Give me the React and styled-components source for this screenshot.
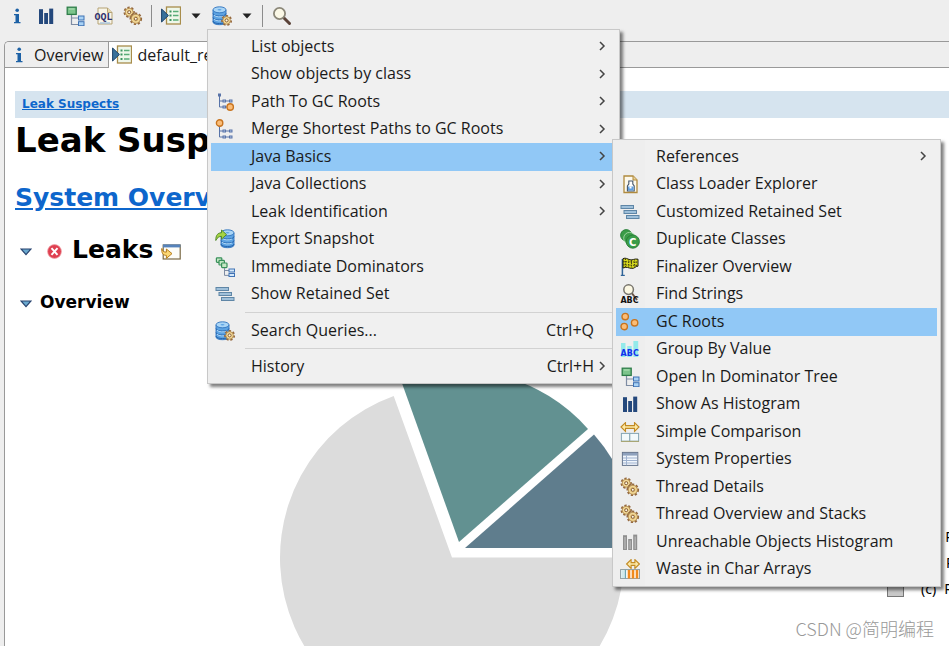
import React from 'react';
import styled, { createGlobalStyle } from 'styled-components';

const GlobalStyle = createGlobalStyle`
  * {
    box-sizing: border-box;
  }

  body {
    margin: 0;
    background: #eeeeee;
    font-family: 'Open Sans', 'Noto Sans CJK SC', sans-serif;
    font-size: 16px;
    color: #1a1a1a;
  }

  button {
    font: inherit;
    color: inherit;
    background: none;
    border: 0;
    padding: 0;
  }
`;

const Window = styled.div`
  position: relative;
  display: flex;
  flex-direction: column;
  height: 100vh;
  overflow: hidden;
`;

const Toolbar = styled.div`
  display: flex;
  align-items: center;
  gap: 8px;
  height: 32px;
  padding-left: 6px;
  margin-bottom: 9px;
`;

const ToolButton = styled.button`
  display: flex;
  align-items: center;
  justify-content: center;
  width: ${props => (props.$narrow ? 14 : 21)}px;
  height: 24px;
`;

const ToolSeparator = styled.div`
  width: 1px;
  height: 22px;
  background: #8c8c8c;
`;

const Editor = styled.div`
  flex: 1;
  min-height: 0;
  display: flex;
  flex-direction: column;
  margin-left: 4px;
  border: 1px solid #999999;
  border-width: 1px 0 0 1px;
  border-top-left-radius: 5px;
  overflow: hidden;
`;

const TabBar = styled.div`
  display: flex;
  height: 26px;
  flex-shrink: 0;
`;

const Tab = styled.button`
  display: flex;
  align-items: center;
  gap: 5px;
  padding: 0 5px 0 ${props => (props.$active ? 3 : 4)}px;
  border-right: 1px solid #999999;
  border-bottom: 1px solid ${props => (props.$active ? '#ffffff' : '#999999')};
  background: ${props => (props.$active ? '#ffffff' : '#eeeeee')};
  white-space: nowrap;
`;

const TabFill = styled.div`
  flex: 1;
  border-bottom: 1px solid #999999;
`;

const Report = styled.main`
  flex: 1;
  min-height: 0;
  padding: 23px 0 0 10px;
  background: #ffffff;
  color: #000000;
  font-family: 'DejaVu Sans', Verdana, sans-serif;
  overflow: hidden;
`;

const Breadcrumb = styled.nav`
  padding-left: 7px;
  background: #d6e4ef;
  font-size: 12px;
  font-weight: 700;
  line-height: 27px;
`;

const Link = styled.a`
  color: #0d66cc;
  text-decoration: underline;
`;

const Title = styled.h1`
  margin: 0;
  font-size: 34px;
  line-height: 44px;
  white-space: nowrap;
`;

const Heading = styled.h2`
  display: flex;
  align-items: center;
  margin: 19px 0 0;
  font-size: 25px;
  line-height: 33px;
  white-space: nowrap;
`;

const SubHeading = styled.h3`
  display: flex;
  align-items: center;
  margin: 26px 0 0;
  font-size: 17px;
  line-height: 20px;
`;

const Twistie = styled.button`
  display: flex;
  width: 12px;
  margin: 4px 0 0 5px;
`;

const HeadingIcon = styled.span`
  display: flex;
  margin: 4px 10px 0 ${props => (props.$wide ? 15 : 8)}px;
`;

const SubHeadingText = styled.span`
  margin-left: 8px;
`;

const ChartRow = styled.div`
  display: flex;
  align-items: center;
  gap: 255px;
  padding-left: 265px;
  margin-top: 58px;
`;

const PieSvg = styled.svg`
  flex-shrink: 0;
`;

const Legend = styled.ul`
  list-style: none;
  margin: 0;
  padding: 0;
  font-family: 'Noto Sans', sans-serif;
  font-size: 14px;
`;

const LegendItem = styled.li`
  display: flex;
  align-items: center;
  gap: 8px;
  height: 26px;
  white-space: nowrap;
`;

const Swatch = styled.span`
  width: 17px;
  height: 17px;
  margin-right: 9px;
  border: 1px solid #777777;
  background: ${props => props.$color};
`;

const MenuBox = styled.div`
  position: absolute;
  z-index: 2;
  padding: 3px;
  border: 1px solid #c8c8c8;
  background: linear-gradient(90deg, #eeeeee 32px, #f0f0f0 32px);
  box-shadow: 3px 3px 3px rgba(0, 0, 0, 0.5);
`;

const ContextMenu = styled(MenuBox)`
  top: 29px;
  left: 207px;
  width: 413px;
`;

const SubMenu = styled(MenuBox)`
  top: -4px;
  left: calc(100% - 4px);
  width: 329px;
`;

/* rows share the height of their group evenly */
const MenuGroup = styled.ul`
  display: grid;
  grid-auto-rows: 1fr;
  height: ${props => props.$height}px;
  margin: 0;
  padding: 0;
  list-style: none;
`;

const MenuDivider = styled.hr`
  height: 1px;
  margin: 4px 0 4px 34px;
  border: 0;
  background: #d2d2d2;
`;

const MenuRow = styled.li`
  position: relative;
  display: flex;
`;

const MenuButton = styled.button`
  display: flex;
  align-items: center;
  flex: 1;
  min-width: 0;
  padding: 0 8px 0 4px;
  background: ${props => (props.$active ? '#91c8f6' : 'transparent')};
  text-align: left;
  line-height: 20px;
  white-space: nowrap;
`;

const MenuIcon = styled.span`
  display: flex;
  width: 20px;
  height: 20px;
  margin-right: 16px;
`;

const MenuLabel = styled.span`
  flex: 1;
  padding-bottom: 2px;
`;

const Shortcut = styled.span`
  padding-bottom: 2px;
  margin-right: 4px;
`;

const Arrow = styled.span`
  display: flex;
  width: 10px;
  padding-bottom: 1px;
`;

const Watermark = styled.div`
  position: absolute;
  right: 15px;
  bottom: 5px;
  color: #999999;
  font-family: 'Noto Sans CJK SC', sans-serif;
  font-size: 18px;
  font-weight: 300;
  line-height: 26px;
`;

const Svg = ({ size = 20, children }) => (
  <svg width={size} height={size} viewBox="0 0 20 20" aria-hidden="true">
    {children}
  </svg>
);

const InfoIcon = () => (
  <Svg>
    <circle cx="10.2" cy="4.2" r="1.8" fill="#1d61a5" />
    <path d="M7 8h5v8h1.5v1.2H7V16h1.5V9.2H7z" fill="#1d61a5" />
  </Svg>
);

const HistogramIcon = ({ gray }) => (
  <Svg>
    <g fill={gray ? '#8f8f8f' : '#24487c'}>
      <rect x="3" y="3.2" width="4" height="14.8" />
      <rect x="8.2" y="7" width="3.8" height="11" />
      <rect x="13.2" y="2.6" width="4" height="15.4" />
    </g>
    {gray && <path d="M5 5v12M10.1 8.5v8.500M15.2 4.500v12.500" stroke="#b4b4b4" strokeWidth="1.4" />}
  </Svg>
);

const TreeIcon = () => (
  <Svg>
    <path d="M6.5 9v9.5H13M6.5 12H13" fill="none" stroke="#7e8ca3" strokeWidth="1.2" />
    <rect x="2.2" y="1.2" width="9" height="7.2" fill="#7cc48b" stroke="#2e7d49" strokeWidth="1.3" />
    <path d="M4 3h5.5" stroke="#b6e3bb" />
    <g fill="#a9d2f5" stroke="#3f72b4">
      <rect x="13.5" y="10" width="5.5" height="4" />
      <rect x="13.5" y="15.7" width="5.5" height="4" />
    </g>
  </Svg>
);

const OqlIcon = () => (
  <Svg>
    <path d="M4 2h9.5L18 6.5V18H4z" fill="#f7f4e8" stroke="#b6a375" />
    <path d="M13.5 2v4.5H18" fill="#e6d9ad" stroke="#b6a375" />
    <path d="M6 17h10" stroke="#a6c4df" strokeWidth="1.4" />
    <text x="0.6" y="14" fontFamily="Liberation Mono, monospace" fontWeight="700" fontSize="10" fill="#30306e">OQL</text>
  </Svg>
);

const Gear = ({ x, y, r = 4.4 }) => (
  <g transform={`translate(${x} ${y})`}>
    <circle r={r + 0.4} fill="none" stroke="#94683f" strokeWidth="2.6" strokeDasharray="2.1 1.6" />
    <circle r={r} fill="#e3c078" stroke="#b08a4e" strokeWidth="0.8" />
    <circle r={r - 1.2} fill="none" stroke="#f5dfa2" strokeWidth="1" />
    <circle r="1.5" fill="#fff8e6" stroke="#8b6238" strokeWidth="1" />
  </g>
);

const GearsIcon = () => (
  <Svg>
    <Gear x={6.2} y={6.2} r={4} />
    <Gear x={12.8} y={12.8} r={4.6} />
  </Svg>
);

const RunReportIcon = () => (
  <Svg>
    <rect x="5.5" y="1" width="14" height="17" fill="#eef7ea" stroke="#a88d4c" strokeWidth="1.3" />
    <path d="M8.5 5.500h2M8.500 9.5h2M8.500 14h2" stroke="#3c9460" strokeWidth="1.8" />
    <path d="M12 5.500h5.500M12 9.5h5.500M12 14h5.500" stroke="#58ad77" strokeWidth="1.3" />
    <path d="M0.6 3v13L7.4 9.5z" fill="#38719a" stroke="#1c4267" />
  </Svg>
);

const Disks = ({ x = 0 }) => (
  <g transform={`translate(${x} 0)`} stroke="#2f73bd" strokeWidth="0.9">
    <path d="M1 4v12c0 3.6 13 3.6 13 0V4z" fill="#5da3e2" />
    <path d="M1 7.5c0 3.4 13 3.4 13 0M1 11.5c0 3.4 13 3.4 13 0M1 15c0 3.4 13 3.4 13 0" fill="none" stroke="#1f5fa8" />
    <path d="M2 9.2c2 2 7 2.2 10 0.8M2 13.2c2 2 7 2.2 10 0.8" fill="none" stroke="#b8dcf8" />
    <ellipse cx="7.5" cy="3.8" rx="6.5" ry="3" fill="#a9d5f6" />
    <ellipse cx="7.5" cy="3.8" rx="2" ry="0.8" fill="#5da3e2" stroke="none" />
  </g>
);

const DatabaseGearIcon = () => (
  <Svg>
    <Disks />
    <Gear x={14.6} y={14.4} r={3.8} />
  </Svg>
);

const ExportIcon = () => (
  <Svg>
    <Disks x={5} />
    <path d="M0.8 11.5C0.6 6 3 3.8 6.5 3.8V1l5 4.6-5 4.6V7.4C4 7.4 2.4 8.4 0.8 11.5z" fill="#a5d343" stroke="#4d8527" strokeWidth="0.9" />
  </Svg>
);

const SearchIcon = () => (
  <Svg>
    <path d="M11.5 11.5l6 6" stroke="#5b4339" strokeWidth="3" strokeLinecap="round" />
    <circle cx="7.5" cy="7.5" r="5.6" fill="#fbf8e6" stroke="#8b8778" strokeWidth="1.8" />
  </Svg>
);

const PathLines = ({ y }) => (
  <g transform={`translate(0 ${y})`} fill="#b9cbe8" stroke="#5873a8" strokeWidth="1">
    <path d="M4.5 1v12h10M4.5 7h10" fill="none" />
    <rect x="3.500" y="0" width="2" height="2" />
    <rect x="8" y="6" width="2.5" height="2" />
    <rect x="14.500" y="6" width="2.5" height="2" />
    <rect x="8" y="12" width="2.5" height="2" />
    <rect x="14.500" y="12" width="2.5" height="2" />
  </g>
);

const Dot = ({ x, y, r = 3.2 }) => (
  <circle cx={x} cy={y} r={r} fill="#fbbd78" stroke="#c8741f" strokeWidth="1.4" />
);

const PathToRootsIcon = () => (
  <Svg>
    <PathLines y={2} />
    <Dot x={15.2} y={15} />
  </Svg>
);

const MergePathsIcon = () => (
  <Svg>
    <PathLines y={5} />
    <Dot x={4.6} y={4} />
  </Svg>
);

const DominatorsIcon = () => (
  <Svg>
    <g fill="#c5e7c4" stroke="#38905a" strokeWidth="1.2">
      <rect x="1.4" y="0.8" width="5.4" height="4.6" rx="0.8" />
      <rect x="4" y="3.4" width="5.4" height="4.6" rx="0.8" />
      <rect x="6.6" y="6" width="5.4" height="4.6" rx="0.8" />
    </g>
    <path d="M9.5 11v7.4H14M9.5 13.5H14" fill="none" stroke="#7e8ca3" />
    <g fill="#d4e8fa" stroke="#3f72b4">
      <rect x="14" y="12" width="5.5" height="3" />
      <rect x="14" y="16.5" width="5.5" height="3" />
    </g>
  </Svg>
);

const RetainedSetIcon = () => (
  <Svg>
    <g fill="#9fc0da" stroke="#5f86a6" strokeWidth="1">
      <rect x="1" y="3.500" width="12.5" height="3" />
      <rect x="4" y="8.500" width="12.5" height="3" />
      <rect x="6.5" y="13.500" width="12.5" height="3" />
    </g>
  </Svg>
);

const ClassLoaderIcon = () => (
  <Svg>
    <path d="M4 2h9l4 4v12.5H4z" fill="#fdf9ec" stroke="#b08a3e" strokeWidth="1.3" />
    <path d="M13 2v4h4" fill="#e9d39b" stroke="#b08a3e" />
    <path d="M8.8 7h4v3l1.4 2v5H7.4v-5l1.4-2z" fill="#ffffff" stroke="#45566b" strokeWidth="1.1" />
    <path d="M8 12.5h5.6v4H8z" fill="#5f9fe0" />
    <path d="M9.5 12.5h2v2h-2z" fill="#ffffff" />
  </Svg>
);

const DuplicateIcon = () => (
  <Svg>
    <g fill="#3a9c48" stroke="#257c36" strokeWidth="0.9">
      <circle cx="6.2" cy="6.2" r="5.6" />
      <circle cx="9.5" cy="9.2" r="5.8" stroke="#a6d6a8" />
      <circle cx="12.8" cy="12.6" r="6.6" />
    </g>
    <text x="9" y="16.5" fontFamily="DejaVu Sans, sans-serif" fontWeight="700" fontSize="10" fill="#ffffff">C</text>
  </Svg>
);

const FinalizerIcon = () => (
  <Svg>
    <path d="M2.4 2v16" stroke="#2f6398" strokeWidth="1.5" />
    <path d="M0.8 18.4h4" stroke="#2f6398" strokeWidth="1.2" />
    <path d="M3 1.6c3-1.2 4 0.4 7 1.2 3 0.6 4-1.4 8-0.6v7c-3 0-3 2.6-6.6 2.2C8 11 7 9.4 3 11z" fill="#d9dc1c" stroke="#1c1c12" />
    <path d="M5.5 1.5v9M8.5 2v9M11.5 3v8M14.5 2v8M3 4.6l15 0.6M3 7.8l14 0.6" fill="none" stroke="#4b4b12" strokeWidth="1.1" strokeDasharray="1.6 0.9" />
  </Svg>
);

const FindStringsIcon = () => (
  <Svg>
    <path d="M11 8l6 8" stroke="#6b5548" strokeWidth="2" />
    <circle cx="8.6" cy="5.6" r="4.8" fill="#fcf8e3" stroke="#77746c" strokeWidth="1.5" />
    <text x="0.4" y="19.4" fontFamily="DejaVu Sans, sans-serif" fontWeight="700" fontSize="8" fill="#111111">ABC</text>
  </Svg>
);

const GcRootsIcon = () => (
  <Svg>
    <Dot x={5.2} y={4.6} />
    <Dot x={4.2} y={14.6} />
    <Dot x={14.6} y={10.8} />
  </Svg>
);

const GroupByIcon = () => (
  <Svg>
    <g fill="#93eaea">
      <rect x="1" y="4" width="4.5" height="14" />
      <rect x="7.2" y="7" width="4.5" height="11" />
      <rect x="13.4" y="2" width="4.8" height="16" />
    </g>
    <text x="0.6" y="16.6" fontFamily="DejaVu Sans, sans-serif" fontWeight="700" fontSize="8" fill="#1430ee">ABC</text>
  </Svg>
);

const DoubleArrow = ({ x1, x2, y }) => (
  <path
    d={`M${x1} ${y}l4.5-4.4v3h${x2 - x1 - 9}v-3l4.5 4.4-4.5 4.4v-3h-${x2 - x1 - 9}v3z`}
    fill="#fde9a4"
    stroke="#c28a24"
    strokeWidth="1.1"
  />
);

const ComparisonIcon = () => (
  <Svg>
    <DoubleArrow x1={1} x2={19} y={5} />
    <g fill="#f2f9fb" stroke="#84a6b5">
      <rect x="1.4" y="11.4" width="8.4" height="7.8" />
      <rect x="9.8" y="11.4" width="8.8" height="7.8" />
    </g>
    <path d="M1 19.4h18" stroke="#a9a46c" />
  </Svg>
);

const PropertiesIcon = () => (
  <Svg>
    <rect x="2.4" y="3.4" width="15.4" height="13" fill="#f1f6fc" stroke="#64748c" />
    <rect x="3" y="4" width="14.2" height="2.6" fill="#8ea1bd" />
    <path d="M3 9h14M3 11.5h14M3 14h14M6.5 6.6v9.6" stroke="#9fb2cf" />
  </Svg>
);

const WasteIcon = () => (
  <Svg>
    <DoubleArrow x1={6.6} x2={19.4} y={5} />
    <rect x="0.6" y="10.6" width="19" height="9" fill="#ffffff" stroke="#8c9a9d" />
    <rect x="1.4" y="11.2" width="3" height="7.8" fill="#cfe9ea" />
    <path d="M5.4 10.6v9" stroke="#6ba5b0" strokeWidth="1.4" />
    <path d="M9 11v8.4M13 11v8.4M17 11v8.4" stroke="#f08a1c" strokeWidth="2.6" />
  </Svg>
);

const ErrorIcon = () => (
  <Svg size={15}>
    <circle cx="10" cy="10" r="9.2" fill="#df3f50" stroke="#f0a3a8" />
    <path d="M6 5.5l8 9M14 5.5l-8 9" stroke="#ffffff" strokeWidth="2.6" />
  </Svg>
);

const OpenWindowIcon = () => (
  <Svg>
    <rect x="2.2" y="3" width="17" height="14" fill="#fdfdf8" stroke="#7a6a45" strokeWidth="1.2" />
    <rect x="2" y="2.4" width="17.4" height="3" fill="#5683bb" />
    <path d="M0.8 6.5c0.4 3 2.4 3.6 4.6 3.6V7l5.6 4.6-5.6 4.8v-3C2 13.4 0.4 11 0.8 6.5z" fill="#fbd774" stroke="#b67d1c" />
  </Svg>
);

const TwistieIcon = () => (
  <svg width="12" height="8" viewBox="0 0 12 8" aria-hidden="true">
    <path d="M1 1h10L6 6.6z" fill="#6aa9cf" stroke="#27436f" strokeWidth="1.2" />
  </svg>
);

const DropArrow = () => (
  <svg width="10" height="6" viewBox="0 0 10 6" aria-hidden="true">
    <path d="M0.5 0.5h9L5 5.5z" fill="#222222" />
  </svg>
);

const ChevronIcon = () => (
  <svg width="8" height="10" viewBox="0 0 8 10" aria-hidden="true">
    <path d="M2 1l4 4-4 4" fill="none" stroke="#444444" strokeWidth="1.5" />
  </svg>
);

const javaBasics = [
  { label: 'References', arrow: true },
  { label: 'Class Loader Explorer', icon: ClassLoaderIcon },
  { label: 'Customized Retained Set', icon: RetainedSetIcon },
  { label: 'Duplicate Classes', icon: DuplicateIcon },
  { label: 'Finalizer Overview', icon: FinalizerIcon },
  { label: 'Find Strings', icon: FindStringsIcon },
  { label: 'GC Roots', icon: GcRootsIcon, active: true },
  { label: 'Group By Value', icon: GroupByIcon },
  { label: 'Open In Dominator Tree', icon: TreeIcon },
  { label: 'Show As Histogram', icon: HistogramIcon },
  { label: 'Simple Comparison', icon: ComparisonIcon },
  { label: 'System Properties', icon: PropertiesIcon },
  { label: 'Thread Details', icon: GearsIcon },
  { label: 'Thread Overview and Stacks', icon: GearsIcon },
  { label: 'Unreachable Objects Histogram', icon: () => <HistogramIcon gray /> },
  { label: 'Waste in Char Arrays', icon: WasteIcon }
];

const queries = [
  { label: 'List objects', arrow: true },
  { label: 'Show objects by class', arrow: true },
  { label: 'Path To GC Roots', icon: PathToRootsIcon, arrow: true },
  { label: 'Merge Shortest Paths to GC Roots', icon: MergePathsIcon, arrow: true },
  { label: 'Java Basics', arrow: true, active: true, children: javaBasics },
  { label: 'Java Collections', arrow: true },
  { label: 'Leak Identification', arrow: true },
  { label: 'Export Snapshot', icon: ExportIcon },
  { label: 'Immediate Dominators', icon: DominatorsIcon },
  { label: 'Show Retained Set', icon: RetainedSetIcon }
];

const search = [{ label: 'Search Queries...', icon: DatabaseGearIcon, shortcut: 'Ctrl+Q' }];
const history = [{ label: 'History', shortcut: 'Ctrl+H', arrow: true }];

const legend = [
  { id: '(a)', text: 'Problem Suspect 1', color: '#5f7d8d' },
  { id: '(b)', text: 'Problem Suspect 2', color: '#629191' },
  { id: '(c)', text: 'Remainder', color: '#c8c8c8' }
];

const Group = ({ items, height }) => (
  <MenuGroup $height={height} role="group">
    {items.map(item => (
      <MenuRow key={item.label} role="none">
        <MenuButton type="button" role="menuitem" $active={item.active}>
          <MenuIcon>{item.icon && <item.icon />}</MenuIcon>
          <MenuLabel>{item.label}</MenuLabel>
          {item.shortcut && <Shortcut>{item.shortcut}</Shortcut>}
          <Arrow>{item.arrow && <ChevronIcon />}</Arrow>
        </MenuButton>
        {item.children && (
          <SubMenu role="menu" aria-label={item.label}>
            <Group items={item.children} height={440} />
          </SubMenu>
        )}
      </MenuRow>
    ))}
  </MenuGroup>
);

const App = () => {
  return (
    <Window>
      <GlobalStyle />
      <Toolbar role="toolbar">
        <ToolButton aria-label="Overview"><InfoIcon /></ToolButton>
        <ToolButton aria-label="Histogram"><HistogramIcon /></ToolButton>
        <ToolButton aria-label="Dominator tree"><TreeIcon /></ToolButton>
        <ToolButton aria-label="Query editor"><OqlIcon /></ToolButton>
        <ToolButton aria-label="Threads"><GearsIcon /></ToolButton>
        <ToolSeparator />
        <ToolButton aria-label="Run report"><RunReportIcon /></ToolButton>
        <ToolButton $narrow aria-label="Reports"><DropArrow /></ToolButton>
        <ToolButton aria-label="Query browser"><DatabaseGearIcon /></ToolButton>
        <ToolButton $narrow aria-label="Queries"><DropArrow /></ToolButton>
        <ToolSeparator />
        <ToolButton aria-label="Find object"><SearchIcon /></ToolButton>
      </Toolbar>

      <Editor>
        <TabBar role="tablist">
          <Tab role="tab"><InfoIcon />Overview</Tab>
          <Tab role="tab" $active><RunReportIcon />default_report</Tab>
          <TabFill />
        </TabBar>
        <Report>
          <Breadcrumb><Link href="#leaks">Leak Suspects</Link></Breadcrumb>
          <Title>Leak Suspects</Title>
          <Heading><Link href="#system">System Overview</Link></Heading>
          <Heading id="leaks">
            <Twistie aria-label="Collapse Leaks"><TwistieIcon /></Twistie>
            <HeadingIcon $wide><ErrorIcon /></HeadingIcon>
            Leaks
            <HeadingIcon><OpenWindowIcon /></HeadingIcon>
          </Heading>
          <SubHeading>
            <Twistie aria-label="Collapse Overview"><TwistieIcon /></Twistie>
            <SubHeadingText>Overview</SubHeadingText>
          </SubHeading>
          <ChartRow>
            <PieSvg width="352" height="384" viewBox="0 0 352 384" role="img" aria-label="Leak suspects">
              <path d="M172 187.5L113.7 26A172 172 0 1 0 344 187.5z" fill="#dcdcdc" />
              <path d="M179 172L121 10.5A172 172 0 0 1 308 59z" fill="#629191" />
              <path d="M185 178L314 64.5A172 172 0 0 1 357 178z" fill="#5f7d8d" />
            </PieSvg>
            <Legend>
              {legend.map(item => (
                <LegendItem key={item.id}>
                  <Swatch $color={item.color} />
                  <span>{item.id}</span>
                  <span>{item.text}</span>
                </LegendItem>
              ))}
            </Legend>
          </ChartRow>
        </Report>
      </Editor>

      <ContextMenu role="menu">
        <Group items={queries} height={275} />
        <MenuDivider />
        <Group items={search} height={27} />
        <MenuDivider />
        <Group items={history} height={27} />
      </ContextMenu>

      <Watermark>CSDN @简明编程</Watermark>
    </Window>
  );
};

export default App;
